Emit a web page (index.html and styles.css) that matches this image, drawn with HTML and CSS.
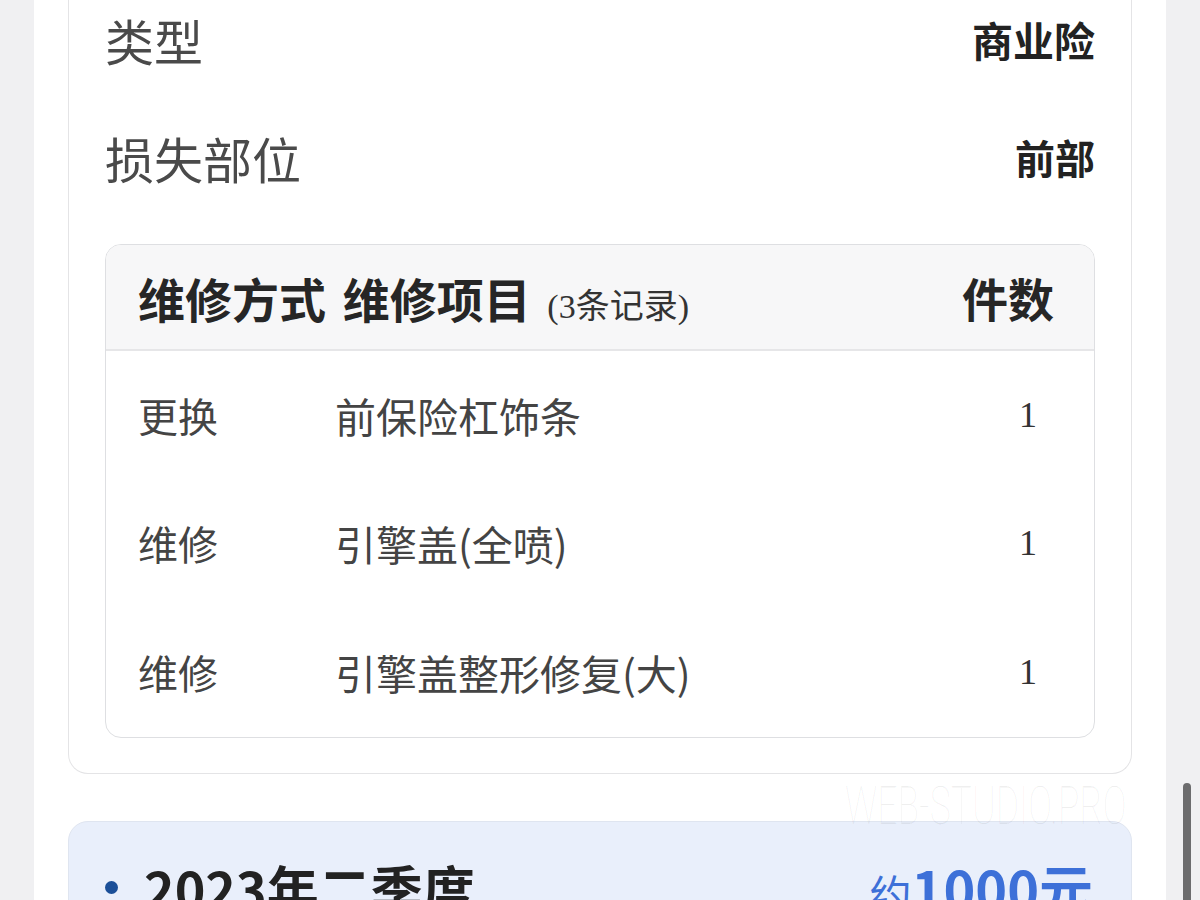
FILE: index.html
```html
<!DOCTYPE html>
<html lang="zh-CN">
<head>
<meta charset="UTF-8">
<meta name="viewport" content="width=device-width, initial-scale=1.0">
<title>维修记录</title>
<link rel="stylesheet" href="styles.css">
</head>
<body>
    <div class="page">
        <div class="card">
            <div class="info-row">
                <span class="label">类型</span>
                <span class="value">商业险</span>
            </div>
            <div class="info-row">
                <span class="label">损失部位</span>
                <span class="value small">前部</span>
            </div>

            <div class="repair-table">
                <div class="table-head">
                    <div class="head-title">维修方式 维修项目 <span class="count-note">(3条记录)</span></div>
                    <div class="head-qty">件数</div>
                </div>
                <div class="table-row">
                    <span class="col-way">更换</span>
                    <span class="col-item">前保险杠饰条</span>
                    <span class="col-qty">1</span>
                </div>
                <div class="table-row">
                    <span class="col-way">维修</span>
                    <span class="col-item">引擎盖(全喷)</span>
                    <span class="col-qty">1</span>
                </div>
                <div class="table-row">
                    <span class="col-way">维修</span>
                    <span class="col-item">引擎盖整形修复(大)</span>
                    <span class="col-qty">1</span>
                </div>
            </div>
        </div>

        <div class="season-card">
            <div class="season-title"><span class="dot"></span>2023年二季度</div>
            <div class="season-price"><span class="approx">约</span>1000元</div>
        </div>
    </div>

    <div class="watermark">WEB-STUDIO.PRO</div>
    <div class="scrollbar"></div>
</body>
</html>
```

FILE: styles.css
```css
/* Global styles */
body {
    margin: 0;
    height: 900px;
    overflow: hidden;
    background-color: #f0f0f2;
    font-family: "Noto Sans CJK SC", "Noto Sans", sans-serif;
    color: #333;
}
.page {
    display: flow-root;
    width: 1064px;
    height: 900px;
    margin-left: 34px;
    padding: 0 34px;
    background-color: #fff;
}

/* Detail card */
.card {
    margin-top: -20px;
    padding: 0 36px 35px;
    border: 1px solid #e4e4e6;
    border-top: none;
    border-radius: 0 0 20px 20px;
}
.info-row {
    display: flex;
    align-items: center;
    justify-content: space-between;
    height: 118px;
}
.label {
    font-size: 49px;
    color: #4a4a4a;
}
.value {
    font-size: 41px;
    font-weight: bold;
    color: #222;
}
.value.small {
    font-size: 40px;
}

/* Repair table */
.repair-table {
    margin-top: 28px;
    border: 1px solid #dedfe2;
    border-radius: 16px;
    overflow: hidden;
}
.table-head {
    display: flex;
    align-items: center;
    justify-content: space-between;
    height: 104px;
    padding: 0 40px 0 32px;
    background-color: #f7f7f8;
    border-bottom: 2px solid #e6e6e8;
}
.head-title,
.head-qty {
    font-size: 46px;
    font-weight: bold;
    color: #262626;
}
.head-title {
    font-size: 47px;
    word-spacing: 6px;
}
.count-note {
    font-family: "Liberation Serif", "Noto Sans CJK SC", serif;
    font-size: 34px;
    font-weight: normal;
    word-spacing: 0;
    color: #333;
}
.table-row {
    display: grid;
    grid-template-columns: 197px 1fr auto;
    align-items: center;
    height: 128px;
    padding: 0 57px 0 32px;
    font-size: 41px;
    color: #444;
}
.table-row:last-child {
    height: 130px;
}
.col-way {
    font-size: 40px;
}
.col-qty {
    font-family: "Liberation Serif", serif;
    font-size: 36px;
    color: #333;
}

/* Season card */
.season-card {
    display: flex;
    align-items: center;
    justify-content: space-between;
    margin-top: 47px;
    height: 130px;
    padding: 0 38px 0 36px;
    background-color: #e9effb;
    border: 1px solid #dfe5f0;
    border-radius: 20px;
}
.season-title {
    display: flex;
    align-items: center;
    gap: 26px;
    font-size: 52px;
    font-weight: bold;
    color: #222;
}
.dot {
    width: 13px;
    height: 13px;
    border-radius: 50%;
    background-color: #1b4f98;
}
.season-price {
    font-size: 54px;
    font-weight: bold;
    color: #3d70d8;
}
.approx {
    font-size: 42px;
    font-weight: normal;
}

/* Overlays */
.watermark {
    position: absolute;
    left: 845px;
    top: 774px;
    white-space: nowrap;
    font-family: "Roboto", "DejaVu Sans", sans-serif;
    font-weight: 100;
    font-size: 54px;
    color: rgba(0, 0, 0, 0.06);
    transform: scaleX(0.66);
    transform-origin: left top;
}
.scrollbar {
    position: absolute;
    left: 1183px;
    top: 783px;
    width: 8px;
    height: 130px;
    border-radius: 4px;
    background-color: #6c6c6e;
}
```
